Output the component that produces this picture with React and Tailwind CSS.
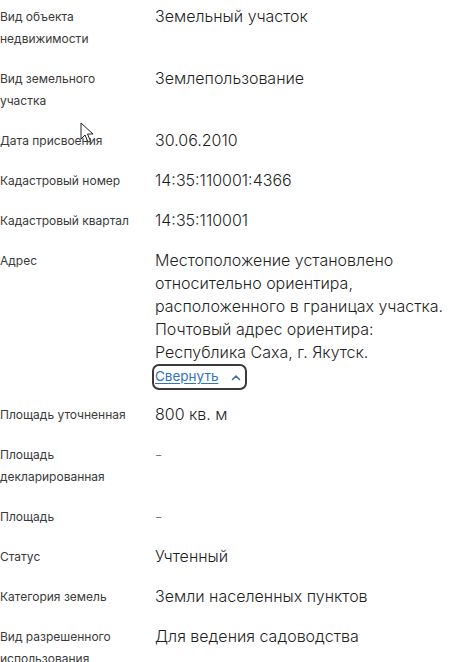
import React from 'react';

const rows = [
    { label: ['Вид объекта', 'недвижимости'], value: 'Земельный участок' },
    { label: ['Вид земельного', 'участка'], value: 'Землепользование' },
    { label: ['Дата присвоения'], value: '30.06.2010' },
    { label: ['Кадастровый номер'], value: '14:35:110001:4366' },
    { label: ['Кадастровый квартал'], value: '14:35:110001' },
    { label: ['Адрес'], address: true },
    { label: ['Площадь уточненная'], value: '800 кв. м' },
    { label: ['Площадь', 'декларированная'], value: '-', dim: true },
    { label: ['Площадь'], value: '-', dim: true },
    { label: ['Статус'], value: 'Учтенный' },
    { label: ['Категория земель'], value: 'Земли населенных пунктов' },
    { label: ['Вид разрешенного', 'использования'], value: 'Для ведения садоводства' },
];

const addressLines = [
    'Местоположение установлено',
    'относительно ориентира,',
    'расположенного в границах участка.',
    'Почтовый адрес ориентира:',
    'Республика Саха, г. Якутск.',
];

const Cursor = () => (
    <svg className="absolute left-[80px] top-[122px]" width="14" height="22" viewBox="0 0 14 22">
        <path d="M1 1 L1 17 L5 13 L8 20 L10.5 19 L7.5 12 L13 12 Z" fill="#fff" stroke="#222" strokeWidth="1" strokeLinejoin="round" />
    </svg>
);

const App = () => {
    return (
        <div className="relative h-[662px] w-[460px] overflow-hidden bg-white font-['Inter','Noto_Sans',sans-serif]">
            <div className="flex flex-col gap-[17px] pt-[5px]">
                {rows.map((row, i) => (
                    <div key={i} className={`flex ${row.address ? '-mb-[4px]' : ''}`}>
                        <div className="w-[155px] shrink-0 pt-[1px] text-[12px] leading-[22px] text-[#3a3a3a]">
                            {row.label.map(line => <div key={line}>{line}</div>)}
                        </div>
                        {row.address ? (
                            <div>
                                <div className="text-[16px] font-light leading-[23px] text-[#1f1f1f]">
                                    {addressLines.map(line => <div key={line} className="whitespace-nowrap">{line}</div>)}
                                </div>
                                <button className="-ml-[3px] flex h-[26px] w-[95px] items-center gap-[12px] rounded-[7px] border-2 border-[#3a3a3a] bg-white pl-[1px]">
                                    <span className="text-[13.5px] leading-none text-[#2f73c2] underline underline-offset-2">Свернуть</span>
                                    <svg width="12" height="12" viewBox="0 0 12 12" className="mt-[1px]">
                                        <path d="M2.5 7.5 L6 4 L9.5 7.5" fill="none" stroke="#3f6ea8" strokeWidth="1.6" strokeLinecap="round" strokeLinejoin="round" />
                                    </svg>
                                </button>
                            </div>
                        ) : (
                            <div className={`whitespace-nowrap text-[16px] font-light leading-[23px] ${row.dim ? 'text-[#777]' : 'text-[#1f1f1f]'}`}>
                                {row.value}
                            </div>
                        )}
                    </div>
                ))}
            </div>
            <Cursor />
        </div>
    );
};

export default App;
